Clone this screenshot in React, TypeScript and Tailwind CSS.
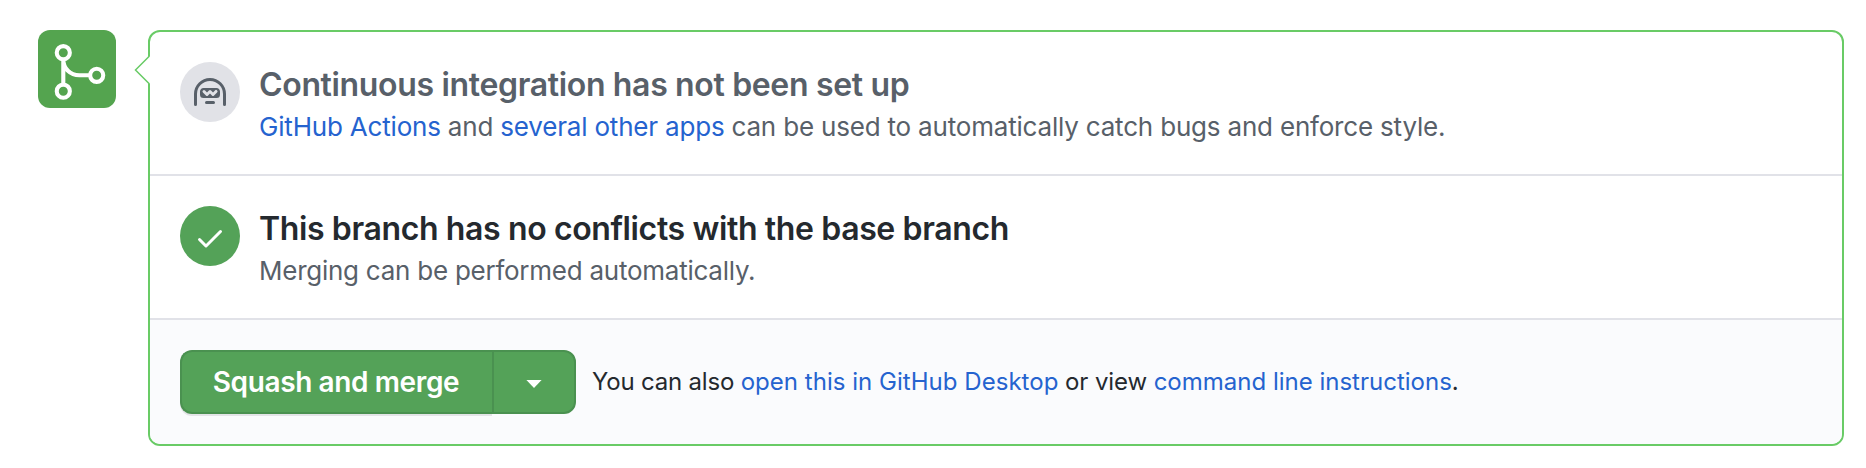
import type { ReactNode } from "react";

function GitMergeIcon() {
  return (
    <svg width="78" height="78" viewBox="0 0 78 78" fill="none" stroke="#fff" strokeWidth="4.1" aria-hidden="true">
      <circle cx="25.3" cy="22.7" r="6.55" />
      <circle cx="25.3" cy="61.2" r="6.55" />
      <circle cx="58.7" cy="45.3" r="6.55" />
      <path d="M25.3 29v26M25.3 29.5c0 9 7 15.8 16 15.8h11" />
    </svg>
  );
}

function HubotIcon() {
  return (
    <svg width="32" height="32" viewBox="0 0 16 16" fill="#586069" fillRule="evenodd" aria-hidden="true">
      <path d="M0 8a8 8 0 1116 0v5.25a.75.75 0 01-1.5 0V8a6.5 6.5 0 10-13 0v5.25a.75.75 0 01-1.5 0V8zm5.5 4.25a.75.75 0 01.75-.75h3.5a.75.75 0 010 1.5h-3.5a.75.75 0 01-.75-.75zM3 6.75C3 5.784 3.784 5 4.75 5h6.5c.966 0 1.75.784 1.75 1.75v1.5A1.75 1.75 0 0111.25 10h-6.5A1.75 1.75 0 013 8.25v-1.5zm1.47-.53a.75.75 0 011.06 0l.97.97.97-.97a.75.75 0 011.06 0l.97.97.97-.97a.75.75 0 111.06 1.06l-1.5 1.5a.75.75 0 01-1.06 0L8 7.81l-.97.97a.75.75 0 01-1.06 0l-1.5-1.5a.75.75 0 010-1.06z" />
    </svg>
  );
}

function CheckIcon() {
  return (
    <svg width="32" height="32" viewBox="0 0 16 16" fill="#fff" fillRule="evenodd" aria-hidden="true">
      <path d="M13.78 4.22a.75.75 0 010 1.06l-7.25 7.25a.75.75 0 01-1.06 0L2.22 9.28a.75.75 0 011.06-1.06L6 10.94l6.72-6.72a.75.75 0 011.06 0z" />
    </svg>
  );
}

function Link({ children, className = "" }: { children: ReactNode; className?: string }) {
  return (
    <a href="#" className={`text-[#2563cf] ${className}`}>
      {children}
    </a>
  );
}

export default function App() {
  return (
    <main className="flex h-[468px] gap-8 bg-white pl-[38px] pr-[22px] pt-[30px] font-['Inter',sans-serif]">
      <div className="size-[78px] shrink-0 overflow-hidden rounded-xl bg-[#54a44f]">
        <GitMergeIcon />
      </div>

      <div className="relative flex h-[416px] grow flex-col rounded-xl border-2 border-[#69cb66]">
        <svg className="absolute -left-4 top-6" width="17" height="28" viewBox="0 0 17 28" aria-hidden="true">
          <path d="M17 0H15.3L1.3 14l14 14H17z" fill="#fff" />
          <path d="M15.5 0L1.5 14l14 14" fill="none" stroke="#69cb66" strokeWidth="1.5" />
        </svg>

        <section className="flex h-36 gap-5 border-b-2 border-[#e1e2e8] px-[30px] pt-[30px]">
          <div className="flex size-[60px] shrink-0 items-start justify-center rounded-full bg-[#e1e2e7] pt-4">
            <HubotIcon />
          </div>
          <div className="pt-px whitespace-nowrap">
            <h2 className="-ml-px text-[32px]/[44px] font-semibold tracking-[-0.34px] text-[#586069]">
              Continuous integration has not been set up
            </h2>
            <p className="-ml-px text-[26px]/[40px] tracking-[-0.19px] text-[#586069]">
              <Link>GitHub Actions</Link> and <Link>several other apps</Link> can be used to automatically catch bugs
              and enforce style.
            </p>
          </div>
        </section>

        <section className="flex h-36 gap-5 border-b-2 border-[#e1e2e8] px-[30px] pt-[30px]">
          <div className="flex size-[60px] shrink-0 items-start justify-center rounded-full bg-[#54a258] pt-4">
            <CheckIcon />
          </div>
          <div className="pt-px whitespace-nowrap">
            <h2 className="-ml-px text-[32px]/[44px] font-semibold tracking-[-0.375px] text-[#24292e]">
              This branch has no conflicts with the base branch
            </h2>
            <p className="-ml-px text-[26px]/[40px] tracking-[-0.25px] text-[#586069]">
              Merging can be performed automatically.
            </p>
          </div>
        </section>

        <section className="flex grow items-center rounded-b-[10px] bg-[#fafbfd] pl-[30px] whitespace-nowrap">
          <div className="flex h-16">
            <button className="w-[312px] rounded-l-xl border-2 border-r-0 border-[#4a9150] bg-[#54a258] pr-0.5 text-[28px] font-semibold tracking-[-0.38px] text-white shadow-[0_2px_0_rgba(27,31,35,0.1)]">
              Squash and merge
            </button>
            <button
              aria-label="Select merge method"
              className="flex w-[84px] items-center justify-center rounded-r-xl border-2 border-[#4a9150] bg-[#54a258]"
            >
              <svg width="16" height="8" viewBox="0 0 16 8" className="mt-1" fill="#fff" aria-hidden="true">
                <path d="M.4 0h15.2L8 8z" />
              </svg>
            </button>
          </div>
          <p className="ml-4 text-2xl text-[#24292e]">
            <span className="tracking-[-0.2px]">You can also </span>
            <Link className="tracking-[0.03px]">open this in GitHub Desktop</Link>
            <span className="tracking-[-0.1px]"> or view </span>
            <Link>command line instructions</Link>.
          </p>
        </section>
      </div>
    </main>
  );
}
